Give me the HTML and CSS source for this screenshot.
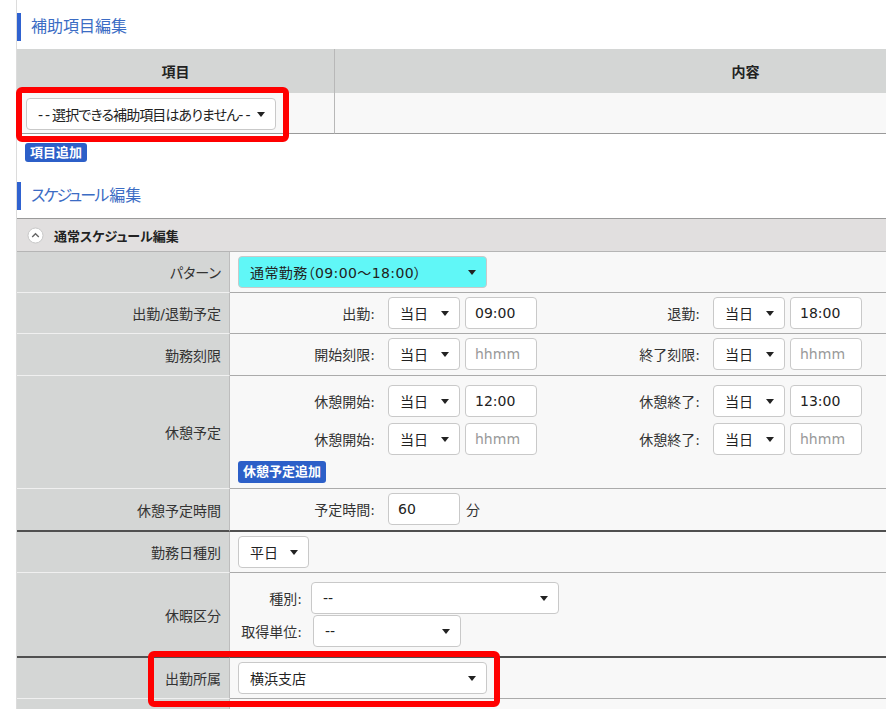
FILE: index.html
```html
<!DOCTYPE html>
<html lang="ja">
<head>
<meta charset="utf-8">
<title>編集</title>
<link rel="stylesheet" href="styles.css">
</head>
<body>
<div class="page">
  <h2 class="sec-title">補助項目編集</h2>
  <div class="aux-wrap">
    <div class="aux">
      <div class="aux-th c1">項目</div>
      <div class="aux-th">内容</div>
      <div class="aux-td c1">
        <div class="sel sel-aux"><span class="aux-txt"><span class="hy">--</span>選択できる補助項目はありません<span class="hy">--</span></span><i class="arr"></i></div>
      </div>
      <div class="aux-td"></div>
    </div>
    <div class="hl hl1"></div>
  </div>
  <div class="btn btn-add">項目追加</div>

  <h2 class="sec-title sec2"><span class="kana">スケジュール</span>編集</h2>
  <div class="sched">
    <div class="sched-head">
      <svg class="chev" width="17" height="17" viewBox="0 0 17 17"><circle cx="8.5" cy="8.5" r="7.5" fill="#fff" stroke="#c8c8c8"/><path d="M5.2 10 L8.5 6.8 L11.8 10" fill="none" stroke="#666" stroke-width="1.4"/></svg>
      <span>通常スケジュール編集</span>
    </div>

    <div class="row">
      <div class="lbl">パターン</div>
      <div class="val">
        <div class="sel sel-pattern"><span class="pat-txt">通常勤務（09:00～18:00）</span><i class="arr"></i></div>
      </div>
    </div>

    <div class="row">
      <div class="lbl">出勤/退勤予定</div>
      <div class="val">
        <div class="pair">
          <div class="pl1">出勤:</div>
          <div class="sel w72"><span>当日</span><i class="arr"></i></div>
          <div class="inp">09:00</div>
          <div class="pl2">退勤:</div>
          <div class="sel w72"><span>当日</span><i class="arr"></i></div>
          <div class="inp">18:00</div>
        </div>
      </div>
    </div>

    <div class="row r42">
      <div class="lbl">勤務刻限</div>
      <div class="val">
        <div class="pair">
          <div class="pl1">開始刻限:</div>
          <div class="sel w72"><span>当日</span><i class="arr"></i></div>
          <div class="inp ph">hhmm</div>
          <div class="pl2">終了刻限:</div>
          <div class="sel w72"><span>当日</span><i class="arr"></i></div>
          <div class="inp ph">hhmm</div>
        </div>
      </div>
    </div>

    <div class="row">
      <div class="lbl">休憩予定</div>
      <div class="val val-break">
        <div class="pair">
          <div class="pl1">休憩開始:</div>
          <div class="sel w72"><span>当日</span><i class="arr"></i></div>
          <div class="inp">12:00</div>
          <div class="pl2">休憩終了:</div>
          <div class="sel w72"><span>当日</span><i class="arr"></i></div>
          <div class="inp">13:00</div>
        </div>
        <div class="pair">
          <div class="pl1">休憩開始:</div>
          <div class="sel w72"><span>当日</span><i class="arr"></i></div>
          <div class="inp ph">hhmm</div>
          <div class="pl2">休憩終了:</div>
          <div class="sel w72"><span>当日</span><i class="arr"></i></div>
          <div class="inp ph">hhmm</div>
        </div>
        <div class="btn btn-break">休憩予定追加</div>
      </div>
    </div>

    <div class="row thick r43">
      <div class="lbl">休憩予定時間</div>
      <div class="val">
        <div class="pair">
          <div class="pl1">予定時間:</div>
          <div class="inp first">60</div>
          <div class="unit">分</div>
        </div>
      </div>
    </div>

    <div class="row">
      <div class="lbl">勤務日種別</div>
      <div class="val">
        <div class="sel w71"><span>平日</span><i class="arr"></i></div>
      </div>
    </div>

    <div class="row thick">
      <div class="lbl">休暇区分</div>
      <div class="val val-leave">
        <div class="leave">
          <div class="ll">種別:</div>
          <div class="sel sel-kind"><span>--</span><i class="arr"></i></div>
          <div class="ll">取得単位:</div>
          <div class="sel sel-unit"><span>--</span><i class="arr"></i></div>
        </div>
      </div>
    </div>

    <div class="row row-office">
      <div class="lbl">出勤所属</div>
      <div class="val">
        <div class="sel sel-office"><span>横浜支店</span><i class="arr"></i></div>
      </div>
      <div class="hl hl2"></div>
    </div>

    <div class="row row-last">
      <div class="lbl"></div>
      <div class="val"></div>
    </div>
  </div>
</div>
</body>
</html>
```

FILE: styles.css
```css
* { box-sizing: border-box; }
html, body { margin: 0; padding: 0; overflow: hidden; background: #fff; }
body {
  font-family: "DejaVu Sans", "Noto Sans CJK JP", sans-serif;
  font-size: 14px;
  color: #333;
  font-feature-settings: "palt";
}
.page {
  margin-left: 16px;
  border-left: 1px solid #dcdcdc;
  width: 1140px;
  min-height: 709px;
  padding-top: 13px;
}
.sec-title {
  margin: 0;
  height: 28px;
  border-left: 4px solid #2f62d0;
  padding-left: 10px;
  font-size: 16px;
  font-weight: normal;
  color: #3b6cc4;
  line-height: 28px;
}
.sec2 { margin-top: 20px; }
.kana { letter-spacing: -2px; margin-right: 2px; }

/* aux table */
.aux-wrap { position: relative; margin-top: 8px; }
.aux {
  display: grid;
  grid-template-columns: 318px 1fr;
}
.aux-th {
  height: 44px;
  background: #d4d6d5;
  font-weight: bold;
  color: #222;
  display: flex;
  align-items: center;
  justify-content: center;
}
.c1 { border-right: 1px solid #b8b8b8; }
.aux-td {
  height: 41px;
  background: #f8f8f8;
  border-bottom: 1px solid #9a9a9a;
  padding: 5px 0 0 9px;
}
.aux-txt { letter-spacing: -0.9px; }
.aux-txt .hy { letter-spacing: 2px; }
.hl {
  position: absolute;
  z-index: 5;
  border: 6px solid #ff0000;
  border-radius: 6px;
  pointer-events: none;
}
.hl1 { left: -1px; top: 38px; width: 273px; height: 55px; }

.btn {
  display: inline-block;
  background: #2c5fc8;
  color: #fff;
  font-weight: bold;
  font-size: 13px;
  border-radius: 3px;
  white-space: nowrap;
}
.btn-add {
  margin: 9px 0 0 8px;
  height: 19px;
  line-height: 19px;
  padding: 0 5px;
}

/* selects & inputs */
.sel {
  display: flex;
  align-items: center;
  justify-content: space-between;
  height: 32px;
  border: 1px solid #c9c9c9;
  border-radius: 4px;
  background: #fff;
  padding: 0 10px 0 11px;
  color: #222;
  white-space: nowrap;
  flex-shrink: 0;
}
.arr {
  display: block;
  width: 0;
  height: 0;
  border-left: 4px solid transparent;
  border-right: 4px solid transparent;
  border-top: 5px solid #222;
}
.sel-aux { width: 250px; }
.sel-pattern { width: 249px; background: #60f7f7; }
.pat-txt { letter-spacing: 0.4px; }
.w72 { width: 72px; }
.w71 { width: 71px; }
.sel-kind { width: 248px; margin-left: -2px; }
.sel-unit { width: 148px; }
.sel-office { width: 249px; }

.inp {
  width: 72px;
  height: 32px;
  border: 1px solid #c9c9c9;
  border-radius: 4px;
  background: #fff;
  padding-left: 9px;
  line-height: 30px;
  color: #222;
  flex-shrink: 0;
}
.inp.ph { color: #999; }

/* schedule */
.sched {
  margin-top: 8px;
  border-top: 1px solid #9a9a9a;
}
.sched-head {
  height: 33px;
  background: #e1dfdf;
  border-bottom: 1px solid #b5b5b5;
  display: flex;
  align-items: center;
  padding-left: 10px;
  font-weight: bold;
  font-size: 13px;
  color: #222;
}
.chev { margin-right: 10px; }
.row {
  display: flex;
  position: relative;
}
.lbl {
  width: 213px;
  flex-shrink: 0;
  background: #d4d6d5;
  border-right: 1px solid #bdbdbd;
  border-bottom: 1px solid #f0f0f0;
  display: flex;
  align-items: center;
  justify-content: flex-end;
  padding-right: 8px;
  white-space: nowrap;
}
.val {
  flex: 1;
  background: #f8f8f8;
  border-bottom: 1px solid #ababab;
  padding: 4px 8px;
}
.r42 .val { padding-bottom: 5px; }
.r43 .val { padding-bottom: 5px; }
.row.thick .lbl, .row.thick .val { border-bottom: 2px solid #505050; }

.pair { display: flex; align-items: center; }
.pl1 { width: 150px; text-align: right; padding-right: 13px; flex-shrink: 0; }
.pl2 { width: 176px; text-align: right; padding-right: 13px; flex-shrink: 0; }
.pair .inp { margin-left: 5px; }
.pair .inp.first { margin-left: 0; }
.unit { margin-left: 6px; }

.val-break { padding: 9px 8px 5px; display: flex; flex-direction: column; gap: 6px; align-items: flex-start; }
.btn-break { height: 22px; line-height: 22px; padding: 0 5px; }

.val-leave { padding: 9px 8px; }
.leave {
  display: grid;
  grid-template-columns: 64px auto;
  column-gap: 11px;
  row-gap: 1px;
  align-items: center;
  justify-content: start;
}
.ll { text-align: right; white-space: nowrap; }

.hl2 { left: 131px; top: -7px; width: 352px; height: 56px; }
.row-last .lbl, .row-last .val { height: 30px; border-bottom: none; }
```
